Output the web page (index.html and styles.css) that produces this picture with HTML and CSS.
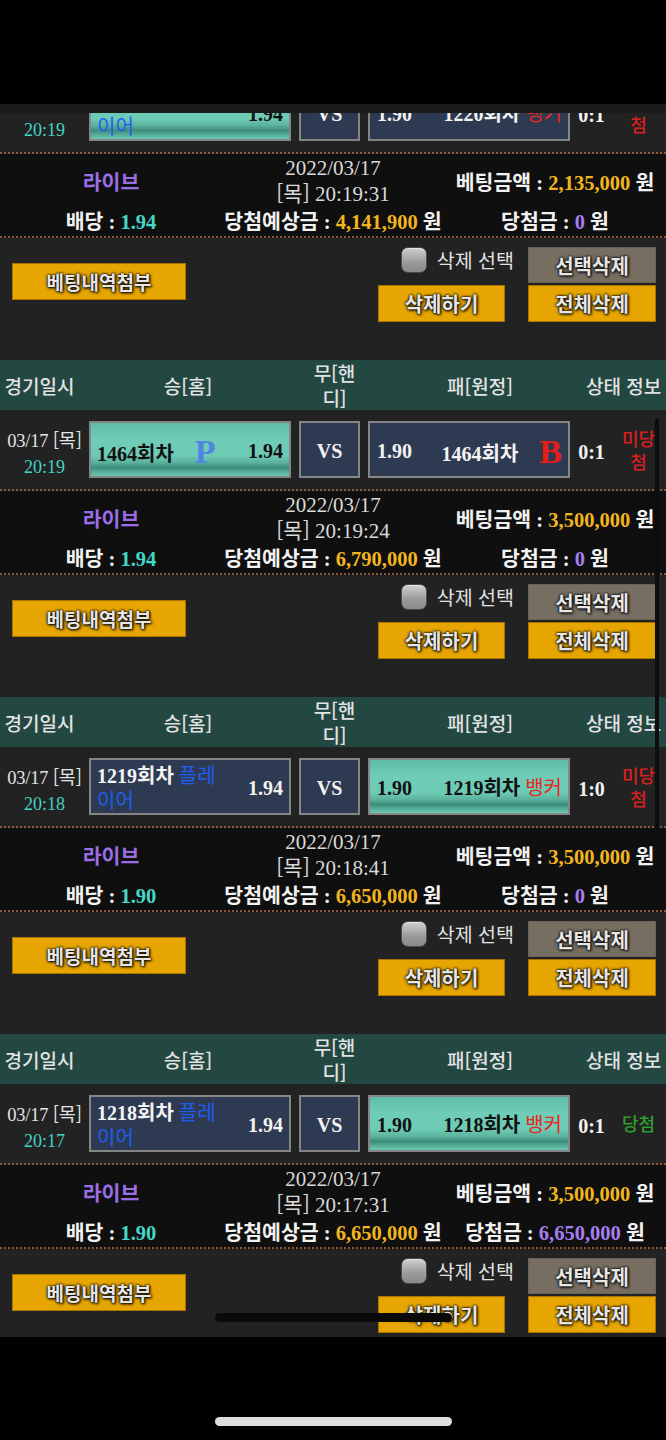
FILE: index.html
```html
<!DOCTYPE html>
<html lang="ko">
<head>
<meta charset="utf-8">
<title>베팅내역</title>
<link rel="stylesheet" href="styles.css">
</head>
<body>
<div class="screen">
  <div class="statusbar"></div>
  <div class="topband"></div>
  <div class="viewport">
    <div class="list">

      <section class="bet">
        <div class="thead">
          <div class="th">경기일시</div>
          <div class="th">승[홈]</div>
          <div class="th th-draw">무[핸디]</div>
          <div class="th">패[원정]</div>
          <div class="th th-status">상태 정보</div>
        </div>
        <div class="match">
          <div class="when"><div class="date">03/17 <span class="ko">[목]</span></div><div class="time">20:19</div></div>
          <div class="pick home teal"><span class="name">1220회차 <span class="tag blue">플레이어</span></span><span class="odds">1.94</span></div>
          <div class="vs">VS</div>
          <div class="pick away navy"><span class="odds">1.90</span><span class="name">1220회차 <span class="tag red">뱅커</span></span></div>
          <div class="score">0:1</div>
          <div class="status lose">미당첨</div>
        </div>
        <div class="info">
          <div class="live">라이브</div>
          <div class="stamp">2022/03/17<br><span class="ko">[목]</span> 20:19:31</div>
          <div>베팅금액 : <span class="yel">2,135,000</span> 원</div>
          <div>배당 : <span class="cyan">1.94</span></div>
          <div>당첨예상금 : <span class="yel">4,141,900</span> 원</div>
          <div>당첨금 : <span class="pur">0</span> 원</div>
        </div>
        <div class="actions">
          <button class="btn orange attach">베팅내역첨부</button>
          <div class="act-right">
            <div class="act-row">
              <label class="chk"><span class="box"></span>삭제 선택</label>
              <button class="btn gray">선택삭제</button>
            </div>
            <div class="act-row">
              <button class="btn orange del">삭제하기</button>
              <button class="btn orange all">전체삭제</button>
            </div>
          </div>
        </div>
      </section>

      <section class="bet">
        <div class="thead">
          <div class="th">경기일시</div>
          <div class="th">승[홈]</div>
          <div class="th th-draw">무[핸디]</div>
          <div class="th">패[원정]</div>
          <div class="th th-status">상태 정보</div>
        </div>
        <div class="match">
          <div class="when"><div class="date">03/17 <span class="ko">[목]</span></div><div class="time">20:19</div></div>
          <div class="pick home teal"><span class="name name-big">1464회차<span class="big pblue">P</span></span><span class="odds">1.94</span></div>
          <div class="vs">VS</div>
          <div class="pick away navy"><span class="odds">1.90</span><span class="name name-big">1464회차<span class="big bred">B</span></span></div>
          <div class="score">0:1</div>
          <div class="status lose">미당첨</div>
        </div>
        <div class="info">
          <div class="live">라이브</div>
          <div class="stamp">2022/03/17<br><span class="ko">[목]</span> 20:19:24</div>
          <div>베팅금액 : <span class="yel">3,500,000</span> 원</div>
          <div>배당 : <span class="cyan">1.94</span></div>
          <div>당첨예상금 : <span class="yel">6,790,000</span> 원</div>
          <div>당첨금 : <span class="pur">0</span> 원</div>
        </div>
        <div class="actions">
          <button class="btn orange attach">베팅내역첨부</button>
          <div class="act-right">
            <div class="act-row">
              <label class="chk"><span class="box"></span>삭제 선택</label>
              <button class="btn gray">선택삭제</button>
            </div>
            <div class="act-row">
              <button class="btn orange del">삭제하기</button>
              <button class="btn orange all">전체삭제</button>
            </div>
          </div>
        </div>
      </section>

      <section class="bet">
        <div class="thead">
          <div class="th">경기일시</div>
          <div class="th">승[홈]</div>
          <div class="th th-draw">무[핸디]</div>
          <div class="th">패[원정]</div>
          <div class="th th-status">상태 정보</div>
        </div>
        <div class="match">
          <div class="when"><div class="date">03/17 <span class="ko">[목]</span></div><div class="time">20:18</div></div>
          <div class="pick home navy"><span class="name">1219회차 <span class="tag blue">플레이어</span></span><span class="odds">1.94</span></div>
          <div class="vs">VS</div>
          <div class="pick away teal"><span class="odds">1.90</span><span class="name">1219회차 <span class="tag red">뱅커</span></span></div>
          <div class="score">1:0</div>
          <div class="status lose">미당첨</div>
        </div>
        <div class="info">
          <div class="live">라이브</div>
          <div class="stamp">2022/03/17<br><span class="ko">[목]</span> 20:18:41</div>
          <div>베팅금액 : <span class="yel">3,500,000</span> 원</div>
          <div>배당 : <span class="cyan">1.90</span></div>
          <div>당첨예상금 : <span class="yel">6,650,000</span> 원</div>
          <div>당첨금 : <span class="pur">0</span> 원</div>
        </div>
        <div class="actions">
          <button class="btn orange attach">베팅내역첨부</button>
          <div class="act-right">
            <div class="act-row">
              <label class="chk"><span class="box"></span>삭제 선택</label>
              <button class="btn gray">선택삭제</button>
            </div>
            <div class="act-row">
              <button class="btn orange del">삭제하기</button>
              <button class="btn orange all">전체삭제</button>
            </div>
          </div>
        </div>
      </section>

      <section class="bet">
        <div class="thead">
          <div class="th">경기일시</div>
          <div class="th">승[홈]</div>
          <div class="th th-draw">무[핸디]</div>
          <div class="th">패[원정]</div>
          <div class="th th-status">상태 정보</div>
        </div>
        <div class="match">
          <div class="when"><div class="date">03/17 <span class="ko">[목]</span></div><div class="time">20:17</div></div>
          <div class="pick home navy"><span class="name">1218회차 <span class="tag blue">플레이어</span></span><span class="odds">1.94</span></div>
          <div class="vs">VS</div>
          <div class="pick away teal"><span class="odds">1.90</span><span class="name">1218회차 <span class="tag red">뱅커</span></span></div>
          <div class="score">0:1</div>
          <div class="status won">당첨</div>
        </div>
        <div class="info">
          <div class="live">라이브</div>
          <div class="stamp">2022/03/17<br><span class="ko">[목]</span> 20:17:31</div>
          <div>베팅금액 : <span class="yel">3,500,000</span> 원</div>
          <div>배당 : <span class="cyan">1.90</span></div>
          <div>당첨예상금 : <span class="yel">6,650,000</span> 원</div>
          <div>당첨금 : <span class="pur">6,650,000</span> 원</div>
        </div>
        <div class="actions">
          <button class="btn orange attach">베팅내역첨부</button>
          <div class="act-right">
            <div class="act-row">
              <label class="chk"><span class="box"></span>삭제 선택</label>
              <button class="btn gray">선택삭제</button>
            </div>
            <div class="act-row">
              <button class="btn orange del">삭제하기</button>
              <button class="btn orange all">전체삭제</button>
            </div>
          </div>
        </div>
      </section>

    </div>
    <div class="scrollthumb"></div>
    <div class="pill-dark"></div>
  </div>
  <div class="bottombar"><div class="home-ind"></div></div>
</div>
</body>
</html>
```

FILE: styles.css
```css
* { box-sizing: border-box; margin: 0; padding: 0; }
html, body { background: #000; }
body {
  width: 666px;
  font-family: "Liberation Serif", "Noto Sans CJK KR", serif;
  color: #eee;
}
.ko { font-family: "Noto Sans CJK KR", sans-serif; }

.screen { display: flex; flex-direction: column; height: 1440px; }
.statusbar { height: 104px; background: #000; flex: none; }
.topband { height: 9px; background: #1b1b1b; flex: none; }
.viewport { position: relative; height: 1224px; flex: none; overflow: hidden; background: #222; }
.list { margin-top: -90px; }
.bottombar {
  flex: 1; background: #000;
  display: flex; justify-content: center; align-items: flex-end;
  padding-bottom: 14px;
}
.home-ind { width: 237px; height: 9px; border-radius: 5px; background: #dedede; }

.scrollthumb {
  position: absolute; left: 655px; top: 305px;
  width: 4px; height: 412px; border-radius: 2px; background: #0d0d0d;
}
.pill-dark {
  position: absolute; left: 215px; top: 1200px;
  width: 237px; height: 9px; border-radius: 5px; background: #0a0a0a;
}

/* header */
.thead {
  height: 50px; background: #234842;
  display: grid; grid-template-columns: 79px 218px 75px 216px 1fr;
  align-items: center;
  font-family: "Noto Sans CJK KR", sans-serif; font-size: 19px; font-weight: 500; color: #e2e2e2;
}
.th { text-align: center; line-height: 25px; }
.th-draw { padding: 0 14px; }
.th-status { text-align: left; white-space: nowrap; margin-left: -2px; }

/* match row */
.match {
  height: 81px; display: flex; align-items: center;
  background: #222; border-bottom: 2px dotted #8a5838;
}
.when { width: 89px; flex: none; text-align: center; padding-top: 7px; }
.date { font-size: 18.5px; line-height: 26px; color: #e4e4e4; white-space: nowrap; letter-spacing: -0.2px; }
.time { font-size: 18px; line-height: 26px; color: #43d3c3; }

.pick {
  width: 202px; height: 57px; flex: none;
  border: 2px solid #858585;
  display: flex; align-items: center;
  padding-top: 4px;
  font-size: 20px; font-weight: bold;
}
.home { padding-left: 6px; padding-right: 6px; }
.away { padding-left: 7px; padding-right: 6px; }
.navy { background: #2e3a52; color: #f3f3f3; }
.teal {
  color: #111;
  background: linear-gradient(to bottom,
    #5fbca6 0%, #6fcdb7 30%, #6dcab4 62%, #5cb39e 74%, #3f8c7a 84%, #56ae99 92%, #6bc8b2 100%);
}
.name { line-height: 25px; max-width: 135px; }
.name-big { padding-top: 5px; }
.home .odds { margin-left: auto; }
.away .name { margin-left: auto; text-align: right; }
.tag { font-weight: normal; }
.blue { color: #1c5ff0; }
.red { color: #e22a22; }
.big { font-size: 34px; line-height: 0; margin-left: 21px; vertical-align: -2px; }
.pblue { color: #4f86e4; }
.bred { color: #e61e1a; }

.vs {
  width: 61px; height: 57px; flex: none; margin: 0 8px;
  border: 2px solid #858585; background: #2e3a52;
  display: flex; align-items: center; justify-content: center;
  padding-top: 4px;
  font-size: 20px; font-weight: bold; color: #f3f3f3;
}
.score { width: 43px; flex: none; text-align: center; padding-top: 5px; font-size: 20px; font-weight: bold; color: #f3f3f3; }
.status {
  flex: 1; padding: 0 6px 0 4px; text-align: center;
  font-family: "Noto Sans CJK KR", sans-serif; font-size: 18px; font-weight: 500; line-height: 23px;
}
.lose { color: #d8201e; }
.won { color: #2f9f2f; }

/* info */
.info {
  height: 84px; padding-top: 3px;
  background: #0f0f0f; border-bottom: 2px dotted #8a5838;
  display: grid; grid-template-columns: repeat(3, 222px); grid-template-rows: 48px 30px;
  align-items: center; justify-items: center;
  font-size: 20.5px; font-weight: bold; color: #f2f2f2; white-space: nowrap;
}
.live { color: #9b6ee6; }
.stamp { font-weight: normal; font-size: 21px; line-height: 24px; text-align: center; color: #dadada; }
.yel { color: #f2b51e; }
.cyan { color: #43d8c8; }
.pur { color: #a77ef0; }

/* actions */
.actions {
  height: 122px; padding: 9px 10px 0 12px;
  display: flex; align-items: flex-start;
  background: #222;
}
.btn {
  appearance: none; -webkit-appearance: none;
  font-family: "Noto Sans CJK KR", sans-serif; font-weight: bold;
  color: #e6e6e6;
  text-shadow: 0 0 2px #000, 0 0 3px rgba(0,0,0,.9), 1px 1px 3px #000;
  display: flex; align-items: center; justify-content: center;
  flex: none;
}
.orange { background: #e6a500; border: 1px solid #a87400; }
.attach { width: 174px; height: 37px; margin-top: 16px; font-size: 19px; }
.act-right { margin-left: auto; display: flex; flex-direction: column; align-items: flex-end; gap: 2px; }
.act-row { display: flex; align-items: flex-start; }
.chk {
  display: flex; align-items: center; gap: 10px;
  font-family: "Noto Sans CJK KR", sans-serif; font-size: 19.5px; color: #e2e2e2;
  line-height: 26px;
}
.box {
  width: 26px; height: 26px; border-radius: 7px;
  background: linear-gradient(to bottom, #cfcfcf, #9a9a9a 60%, #8a8a8a);
  border: 1px solid #4a4a4a;
  box-shadow: inset 0 1px 1px rgba(255,255,255,.5);
}
.gray { width: 128px; height: 36px; margin-left: 14px; background: #776e62; border: 1px solid #6a6256; font-size: 20px; }
.del { width: 127px; height: 37px; margin-right: 23px; font-size: 20px; }
.all { width: 128px; height: 37px; font-size: 20px; }
```
